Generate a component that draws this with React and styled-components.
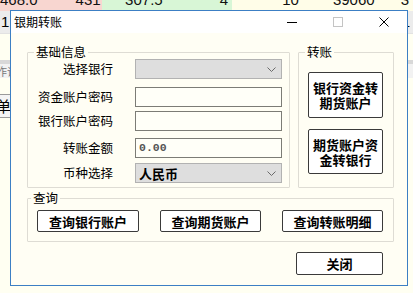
import React from 'react';
import styled, { createGlobalStyle } from 'styled-components';

const GlobalStyle = createGlobalStyle`
  html, body {
    margin: 0;
    padding: 0;
    width: 413px;
    height: 293px;
    overflow: hidden;
    background: #fffff2;
    font-family: "Noto Sans CJK SC", "Liberation Sans", sans-serif;
  }
`;

const Screen = styled.div`
  position: relative;
  width: 413px;
  height: 293px;
  overflow: hidden;
  background: #fffff2;
`;

/* the quote table behind the dialog */
const QuoteRow = styled.div`
  display: flex;
  height: 11px;
  overflow: hidden;
`;

const QuoteCell = styled.div`
  width: ${p => p.w}px;
  flex: none;
  background: ${p => p.bg || '#fffde8'};
  font-family: "Liberation Sans", sans-serif;
  font-size: 15px;
  line-height: 22px;
  margin-top: -11px;
  text-align: right;
  padding-right: ${p => p.pr || 4}px;
  box-sizing: border-box;
  color: #111;
`;

const Gap = styled.span`
  margin-right: ${p => p.r}px;
`;

const SubRow = styled.div`
  display: flex;
  justify-content: space-between;
  height: 22px;
  background: #fffff2;
  border-bottom: 1px solid #e2e2e2;
  font-family: "Liberation Sans", sans-serif;
  font-size: 15px;
  line-height: 22px;
`;

const SubCell = styled.span`
  background: #ececec;
  padding: 0 3px 0 1px;
`;

const PanelHead = styled.div`
  margin-top: 26px;
  height: 14px;
  border-top: 4px solid #d8d8d8;
  background: #f2f2f2;
  color: #777;
  font-size: 11px;
  line-height: 14px;
  text-indent: -4px;
`;

const OrderButton = styled.div`
  margin: 16px 0 0 -30px;
  width: 40px;
  height: 22px;
  border: 1px solid #9a9a9a;
  background: #f4f4f4;
  font-size: 15px;
  line-height: 22px;
  text-align: right;
  padding-right: 1px;
`;

/* dialog */
const Dialog = styled.div`
  position: absolute;
  left: 10px;
  top: 10px;
  width: 398px;
  height: 276px;
  box-sizing: border-box;
  border: 1px solid #3c7fc4;
  background: #fffef4;
  display: flex;
  flex-direction: column;
`;

const TitleBar = styled.div`
  display: flex;
  align-items: center;
  height: 22px;
  background: #ffffff;
`;

const Title = styled.div`
  flex: 1;
  padding-left: 3px;
  font-size: 12px;
  line-height: 22px;
  color: #000;
`;

const Caption = styled.div`
  width: 46px;
  height: 22px;
  display: flex;
  align-items: center;
  justify-content: center;
`;

const Body = styled.div`
  padding: 12px 0 0 16px;
  display: flex;
  flex-direction: column;
`;

const TopRow = styled.div`
  display: flex;
  gap: 8px;
`;

const Group = styled.fieldset`
  margin: ${p => p.mt || 0}px 0 0 0;
  padding: 0;
  width: ${p => p.w}px;
  min-width: 0;
  box-sizing: border-box;
  border: 1px solid #dedcd4;
  border-radius: 1px;
`;

const Legend = styled.legend`
  margin-left: ${p => p.ml}px;
  padding: 0 2px;
  font-size: 12.5px;
  line-height: 14px;
  color: #000;
`;

const FormGrid = styled.div`
  display: flex;
  flex-direction: column;
  padding-bottom: 4px;
`;

const FormRow = styled.div`
  display: flex;
  align-items: center;
  height: 20px;
  margin-top: ${p => p.mt || 0}px;
`;

const Label = styled.div`
  width: 85px;
  text-align: right;
  font-size: 12.5px;
  line-height: 20px;
  margin-right: 22px;
  color: #000;
`;

const TextBox = styled.div`
  width: 147px;
  height: 20px;
  box-sizing: border-box;
  border: 1px solid #7c7c76;
  background: #fffff8;
  padding-left: 3px;
  font-family: "Liberation Mono", monospace;
  font-weight: 700;
  font-size: 11.5px;
  line-height: 18px;
  color: #555;
`;

const Select = styled.div`
  width: 147px;
  height: 20px;
  box-sizing: border-box;
  border: 1px solid #b2b2b2;
  background: #dedede;
  display: flex;
  align-items: center;
  justify-content: space-between;
  padding: 0 5px 0 3px;
  font-size: 13px;
  font-weight: 700;
  color: #000;
`;

const Chevron = () => (
  <svg width="9" height="5" viewBox="0 0 9 5">
    <polyline points="0.5,0.5 4.5,4.5 8.5,0.5" fill="none" stroke="#6a6a6a" strokeWidth="1" />
  </svg>
);

const TransferStack = styled.div`
  display: flex;
  flex-direction: column;
  gap: 11px;
  padding: 13px 0 0 9px;
`;

const Button = styled.button`
  width: ${p => p.w}px;
  height: ${p => p.h}px;
  box-sizing: border-box;
  border: 1px solid #3a3a3a;
  border-radius: 2px;
  background: #ffffff;
  padding: 0 2px;
  font-family: "Noto Sans CJK SC", sans-serif;
  font-size: 13px;
  font-weight: 700;
  line-height: 15px;
  color: #000;
  cursor: pointer;
`;

const QueryRow = styled.div`
  display: flex;
  gap: 21px;
  padding: 5px 0 9px 9px;
`;

const Footer = styled.div`
  display: flex;
  justify-content: flex-end;
  margin-top: 10px;
  padding-right: 24px;
`;

const fields = [
  { label: '选择银行', kind: 'select', value: '', mt: 0 },
  { label: '资金账户密码', kind: 'text', value: '', mt: 8 },
  { label: '银行账户密码', kind: 'text', value: '', mt: 4 },
  { label: '转账金额', kind: 'text', value: '0.00', mt: 7 },
  { label: '币种选择', kind: 'select', value: '人民币', mt: 5 },
];

export default function App() {
  return (
    <>
      <GlobalStyle />
      <Screen>
        <QuoteRow>
          <QuoteCell w={102} bg="#f8d6d0" pr={5}>
            <Gap r={38}>468.0</Gap>431
          </QuoteCell>
          <QuoteCell w={130} bg="#d8f6d6" pr={4}>
            <Gap r={57}>307.5</Gap>4
          </QuoteCell>
          <QuoteCell w={181} pr={4}>
            <Gap r={34}>10</Gap>
            <Gap r={26}>39060</Gap>3
          </QuoteCell>
        </QuoteRow>
        <SubRow>
          <SubCell>1</SubCell>
          <SubCell>1</SubCell>
        </SubRow>
        <PanelHead>作词</PanelHead>
        <OrderButton>下单</OrderButton>

        <Dialog>
          <TitleBar>
            <Title>银期转账</Title>
            <Caption>
              <svg width="10" height="1"><rect width="10" height="1" fill="#000" /></svg>
            </Caption>
            <Caption>
              <svg width="10" height="10"><rect x="0.5" y="0.5" width="9" height="9" fill="none" stroke="#c4c4c4" /></svg>
            </Caption>
            <Caption>
              <svg width="10" height="10" viewBox="0 0 10 10">
                <path d="M0.5 0.5 L9.5 9.5 M9.5 0.5 L0.5 9.5" stroke="#000" strokeWidth="1" />
              </svg>
            </Caption>
          </TitleBar>

          <Body>
            <TopRow>
              <Group w={263}>
                <Legend ml={6}>基础信息</Legend>
                <FormGrid>
                  {fields.map(f => (
                    <FormRow key={f.label} mt={f.mt}>
                      <Label>{f.label}</Label>
                      {f.kind === 'select' ? (
                        <Select>
                          <span>{f.value}</span>
                          <Chevron />
                        </Select>
                      ) : (
                        <TextBox>{f.value}</TextBox>
                      )}
                    </FormRow>
                  ))}
                </FormGrid>
              </Group>
              <Group w={96}>
                <Legend ml={6}>转账</Legend>
                <TransferStack>
                  <Button w={75} h={46}>银行资金转<br />期货账户</Button>
                  <Button w={75} h={45}>期货账户资<br />金转银行</Button>
                </TransferStack>
              </Group>
            </TopRow>

            <Group w={367} mt={3}>
              <Legend ml={3}>查询</Legend>
              <QueryRow>
                <Button w={102} h={22}>查询银行账户</Button>
                <Button w={101} h={22}>查询期货账户</Button>
                <Button w={101} h={22}>查询转账明细</Button>
              </QueryRow>
            </Group>

            <Footer>
              <Button w={87} h={23}>关闭</Button>
            </Footer>
          </Body>
        </Dialog>
      </Screen>
    </>
  );
}
